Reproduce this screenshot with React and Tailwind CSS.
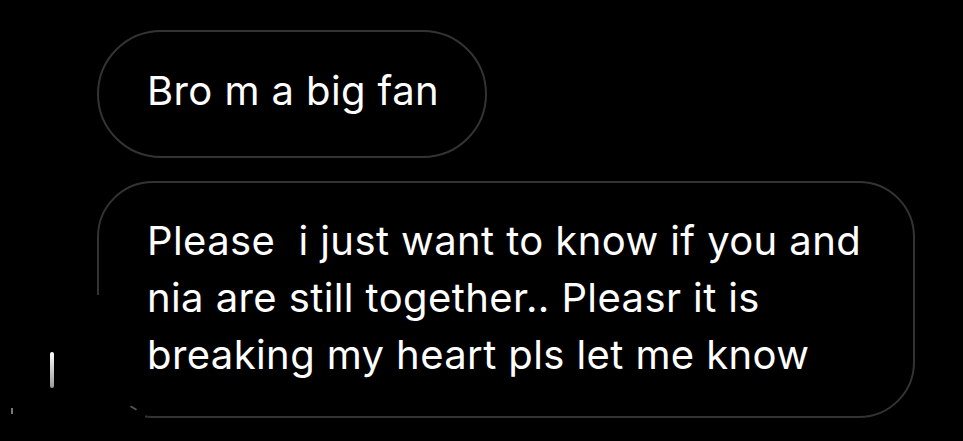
import React from 'react';

const App = () => {
  return (
    <div className="relative w-[963px] h-[441px] overflow-hidden bg-black text-white font-['Inter',sans-serif]">
      <div className="pt-[30px] pl-[97px] flex flex-col gap-[23px]">
        {/* first message */}
        <div className="w-[390px] h-[128px] rounded-full border-2 border-[#333] flex items-center pl-[48px] pb-[6px]">
          <p className="text-[40px] leading-none tracking-[0.4px]">Bro m a big fan</p>
        </div>

        {/* second message */}
        <div className="relative w-[818px] h-[237px] rounded-[56px] border-2 border-[#333] pl-[48px] pt-[29px]">
          <p className="text-[40px] leading-[57px] tracking-[0.4px] whitespace-pre">
            {'Please  i just want to know if you and\nnia are still together.. Pleasr it is\nbreaking my heart pls let me know'}
          </p>
          {/* lower left edge hidden in the screenshot */}
          <div className="absolute left-[-4px] top-[112px] w-[50px] h-[126px] bg-black" />
        </div>
      </div>

      {/* stray light marks at the left */}
      <div className="absolute left-[50px] top-[352px] w-[4px] h-[36px] rounded-full bg-gradient-to-b from-white to-[#999]" />
      <div className="absolute left-[11px] top-[408px] w-[2px] h-[6px] bg-[#777]" />
      <div className="absolute left-[130px] top-[407px] w-[7px] h-[2px] rotate-[30deg] bg-[#555]" />
    </div>
  );
};

export default App;
